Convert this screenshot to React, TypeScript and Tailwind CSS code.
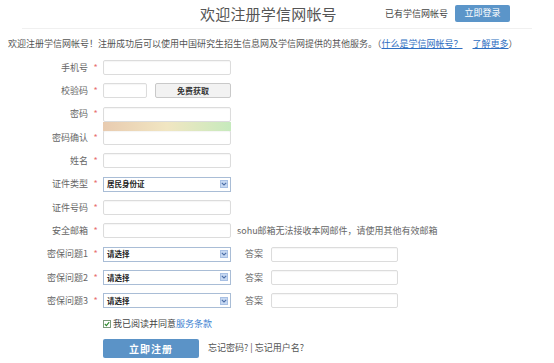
import { useState } from "react";

const font = { fontFamily: '"Noto Sans CJK SC", "Liberation Sans", sans-serif' };

function Label({ text }: { text: string }) {
  return (
    <>
      <div className="w-[88px] text-right text-[9px] text-[#666]">{text}</div>
      <div className="w-[15px] text-center text-[9px] text-[#e87070]">*</div>
    </>
  );
}

function TextBox({ w = "w-[128px]" }: { w?: string }) {
  return (
    <div
      className={`${w} h-[15px] border border-[#dcdcdc] rounded-[2px] bg-white shadow-[inset_0_1px_1px_rgba(0,0,0,0.04)]`}
    />
  );
}

function Select({ value }: { value: string }) {
  return (
    <div className="w-[128px] h-[15px] border border-[#a9bdd6] bg-white flex items-center pl-[3px] pr-[2px]">
      <span className="flex-1 text-[7.5px] font-bold text-[#222] leading-none">{value}</span>
      <span className="w-[8px] h-[8px] bg-[#c6d8f2] border border-[#a8c0e4] flex items-center justify-center">
        <svg width="6" height="4" viewBox="0 0 6 4">
          <path d="M0.8 0.8 L3 3 L5.2 0.8" stroke="#4d6fa8" strokeWidth="1.1" fill="none" />
        </svg>
      </span>
    </div>
  );
}

function Row({ children }: { children: React.ReactNode }) {
  return <div className="h-[23.3px] flex items-center">{children}</div>;
}

export default function App() {
  const [agree, setAgree] = useState(true);

  return (
    <div className="w-[554px] h-[363px] bg-white overflow-hidden" style={font}>
      <div className="mx-[22px] h-[29px] border-b border-[#f0f0f0] flex items-center pl-[178px] pr-[22px]">
        <div className="text-[15px] text-[#555] tracking-[0.2px]">欢迎注册学信网帐号</div>
        <div className="ml-auto text-[9px] text-[#444]">已有学信网帐号</div>
        <button className="ml-[7px] w-[55px] h-[17px] bg-[#5b95c9] rounded-[2px] text-white text-[9px] mb-[2px]">
          立即登录
        </button>
      </div>

      <div className="pl-[8px] mt-[9px] text-[9px] text-[#555] leading-[12px]">
        欢迎注册学信网帐号！注册成功后可以使用中国研究生招生信息网及学信网提供的其他服务。（
        <a className="text-[#2f6fc2] underline">什么是学信网帐号？</a>
        <span className="inline-block w-[10px]" />
        <a className="text-[#2f6fc2] underline">了解更多</a>）
      </div>

      <div className="mt-[6px]">
        <Row>
          <Label text="手机号" />
          <TextBox />
        </Row>
        <Row>
          <Label text="校验码" />
          <TextBox w="w-[44px]" />
          <button className="ml-[8px] w-[76px] h-[15px] bg-[#f2f2f2] border border-[#c9c9c9] rounded-[2px] text-[8px] font-bold text-[#333] leading-none">
            免费获取
          </button>
        </Row>
        <Row>
          <Label text="密码" />
          <div className="relative">
            <TextBox />
            <div className="absolute left-0 top-full w-[128px] h-[9px] bg-gradient-to-r from-[#e8cbb0] via-[#f1e6c2] to-[#c6eabd]" />
          </div>
        </Row>
        <Row>
          <Label text="密码确认" />
          <TextBox />
        </Row>
        <Row>
          <Label text="姓名" />
          <TextBox />
        </Row>
        <Row>
          <Label text="证件类型" />
          <Select value="居民身份证" />
        </Row>
        <Row>
          <Label text="证件号码" />
          <TextBox />
        </Row>
        <Row>
          <Label text="安全邮箱" />
          <TextBox />
          <span className="ml-[6px] text-[9px] text-[#666]">sohu邮箱无法接收本网邮件，请使用其他有效邮箱</span>
        </Row>
        {[1, 2, 3].map((n) => (
          <Row key={n}>
            <Label text={`密保问题${n}`} />
            <Select value="请选择" />
            <span className="ml-[14px] w-[26px] text-[9px] text-[#666]">答案</span>
            <TextBox w="w-[127px]" />
          </Row>
        ))}
        <Row>
          <div className="w-[103px]" />
          <button
            onClick={() => setAgree(!agree)}
            className="w-[8px] h-[8px] border border-[#7c9a7c] bg-white flex items-center justify-center"
          >
            {agree && (
              <svg width="6" height="6" viewBox="0 0 6 6">
                <path d="M0.8 3 L2.4 4.6 L5.2 1.2" stroke="#2d8a2d" strokeWidth="1.1" fill="none" />
              </svg>
            )}
          </button>
          <span className="ml-[2px] text-[9px] text-[#444]">
            我已阅读并同意<a className="text-[#3a80d0]">服务条款</a>
          </span>
        </Row>
        <div className="mt-[3px] flex items-center">
          <div className="w-[103px]" />
          <button className="w-[96px] h-[19px] bg-[#5b93c7] rounded-[2px] text-white text-[10px] font-bold tracking-[1px]">
            立即注册
          </button>
          <span className="ml-[9px] text-[9px] text-[#555]">忘记密码? | 忘记用户名?</span>
        </div>
      </div>
    </div>
  );
}
